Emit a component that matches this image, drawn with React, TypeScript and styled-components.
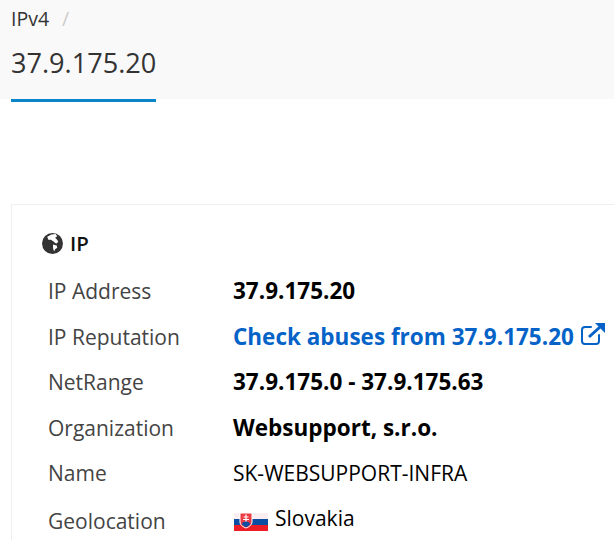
import React from "react";
import styled, { createGlobalStyle } from "styled-components";

const Global = createGlobalStyle`
  html, body { margin: 0; padding: 0; background: #fff; }
  body { font-family: "Open Sans", sans-serif; color: #000; width: 614px; height: 540px; overflow: hidden; }
`;

const Page = styled.div`
  width: 614px;
  height: 540px;
  overflow: hidden;
`;

const Header = styled.header`
  background: #f9f9f9;
  height: 99px;
  padding-left: 11px;
  box-sizing: border-box;
`;

const Crumbs = styled.div`
  display: flex;
  gap: 13px;
  height: 37px;
  padding-top: 7px;
  box-sizing: border-box;
  font-size: 19.5px;
  line-height: 24px;
  color: #333;
`;

const Slash = styled.span`
  color: #ccc;
`;

const Title = styled.h1`
  display: inline-block;
  margin: 0;
  height: 65px;
  box-sizing: border-box;
  padding-top: 8px;
  font-size: 27.1px;
  font-weight: 400;
  line-height: 36px;
  color: #333;
  border-bottom: 3px solid #0a85c9;
`;

const Card = styled.section`
  margin: 105px 0 0 11px;
  border: 1px solid #eee;
  border-right: none;
  padding: 24px 0 0 30px;
  height: 400px;
  box-sizing: border-box;
`;

const CardTitle = styled.h2`
  display: flex;
  align-items: center;
  gap: 7px;
  margin: 0 0 11px;
  height: 28px;
  font-size: 20.5px;
  line-height: 28px;
  font-weight: 600;
  color: #111;
`;

const Row = styled.div<{ $h?: number }>`
  display: grid;
  grid-template-columns: 185px 1fr;
  align-items: center;
  padding-left: 6px;
  height: ${(p) => p.$h ?? 45.5}px;
  white-space: nowrap;
`;

const Label = styled.div`
  padding-top: 1px;
  font-size: 21px;
  color: #444;
`;

const Strong = styled.div`
  font-size: 22.5px;
  font-weight: 700;
  color: #000;
`;

const Plain = styled.div`
  font-size: 21px;
  color: #000;
`;

const Geo = styled.div`
  display: flex;
  align-items: flex-start;
  gap: 7px;
  margin-bottom: 6px;
  font-size: 21px;
  line-height: 26px;
  color: #000;
`;

const FlagIcon = styled.svg`
  flex: none;
  margin: 8px 0 0 1px;
`;

const Link = styled.a`
  display: flex;
  align-items: center;
  gap: 6px;
  font-size: 22.5px;
  font-weight: 700;
  color: #0563c8;
`;

const ExternalIcon = styled.svg`
  flex: none;
  margin: -4px 0 0 1px;
`;

const Globe = () => (
  <svg width="21" height="21" viewBox="0 0 20 20" aria-hidden="true">
    <circle cx="10" cy="10" r="10" fill="#333" />
    <path d="M5 3.500 L9 1.500 L13 1 L14.500 3 L12.500 4.500 L14 6 L15.500 8 L14 10 L12.500 9.500 L11 8 L8.500 6.500 L6 6.500Z M10.500 11 L14 12 L14.500 14 L12.500 15.500 L11.500 17.500 L10.500 14.500Z" fill="#fff" />
  </svg>
);

const External = () => (
  <ExternalIcon width="24" height="22" viewBox="0 0 24 22" fill="none" aria-hidden="true">
    <path d="M10 4H4a3 3 0 0 0-3 3v11a3 3 0 0 0 3 3h11a3 3 0 0 0 3-3v-6" stroke="#0563c8" strokeWidth="2" strokeLinecap="round" />
    <path d="M8 14 19 4" stroke="#0563c8" strokeWidth="3" />
    <path d="M14 0h10v10z" fill="#0563c8" />
  </ExternalIcon>
);

const Flag = () => (
  <FlagIcon width="34" height="18" viewBox="0 0 34 18" aria-hidden="true">
    <rect width="34" height="6" fill="#fbeef0" />
    <rect y="6" width="34" height="6" fill="#0b4ea2" />
    <rect y="12" width="34" height="6" fill="#ee1c25" />
    <path d="M6 0h12v9c0 3-3 5-6 6-3-1-6-3-6-6z" fill="#ee3a42" stroke="#fff" strokeWidth="1" />
    <path d="M12 1.500v8M9.500 4h5M9 6.500h6" stroke="#fff" strokeWidth="1.200" />
    <path d="M8 11.500a4 3 0 0 1 8 0c-1 1.200-2.500 2.200-4 2.800-1.500-.6-3-1.600-4-2.800z" fill="#0b4ea2" />
  </FlagIcon>
);

export default function App() {
  return (
    <Page>
      <Global />
      <Header>
        <Crumbs>
          <span>IPv4</span>
          <Slash>/</Slash>
        </Crumbs>
        <Title>37.9.175.20</Title>
      </Header>
      <Card>
        <CardTitle>
          <Globe />
          IP
        </CardTitle>
        <Row>
          <Label>IP Address</Label>
          <Strong>37.9.175.20</Strong>
        </Row>
        <Row>
          <Label>IP Reputation</Label>
          <Link>
            Check abuses from 37.9.175.20
            <External />
          </Link>
        </Row>
        <Row>
          <Label>NetRange</Label>
          <Strong>37.9.175.0 - 37.9.175.63</Strong>
        </Row>
        <Row>
          <Label>Organization</Label>
          <Strong>Websupport, s.r.o.</Strong>
        </Row>
        <Row>
          <Label>Name</Label>
          <Plain>SK-WEBSUPPORT-INFRA</Plain>
        </Row>
        <Row $h={50}>
          <Label>Geolocation</Label>
          <Geo>
            <Flag />
            Slovakia
          </Geo>
        </Row>
      </Card>
    </Page>
  );
}
